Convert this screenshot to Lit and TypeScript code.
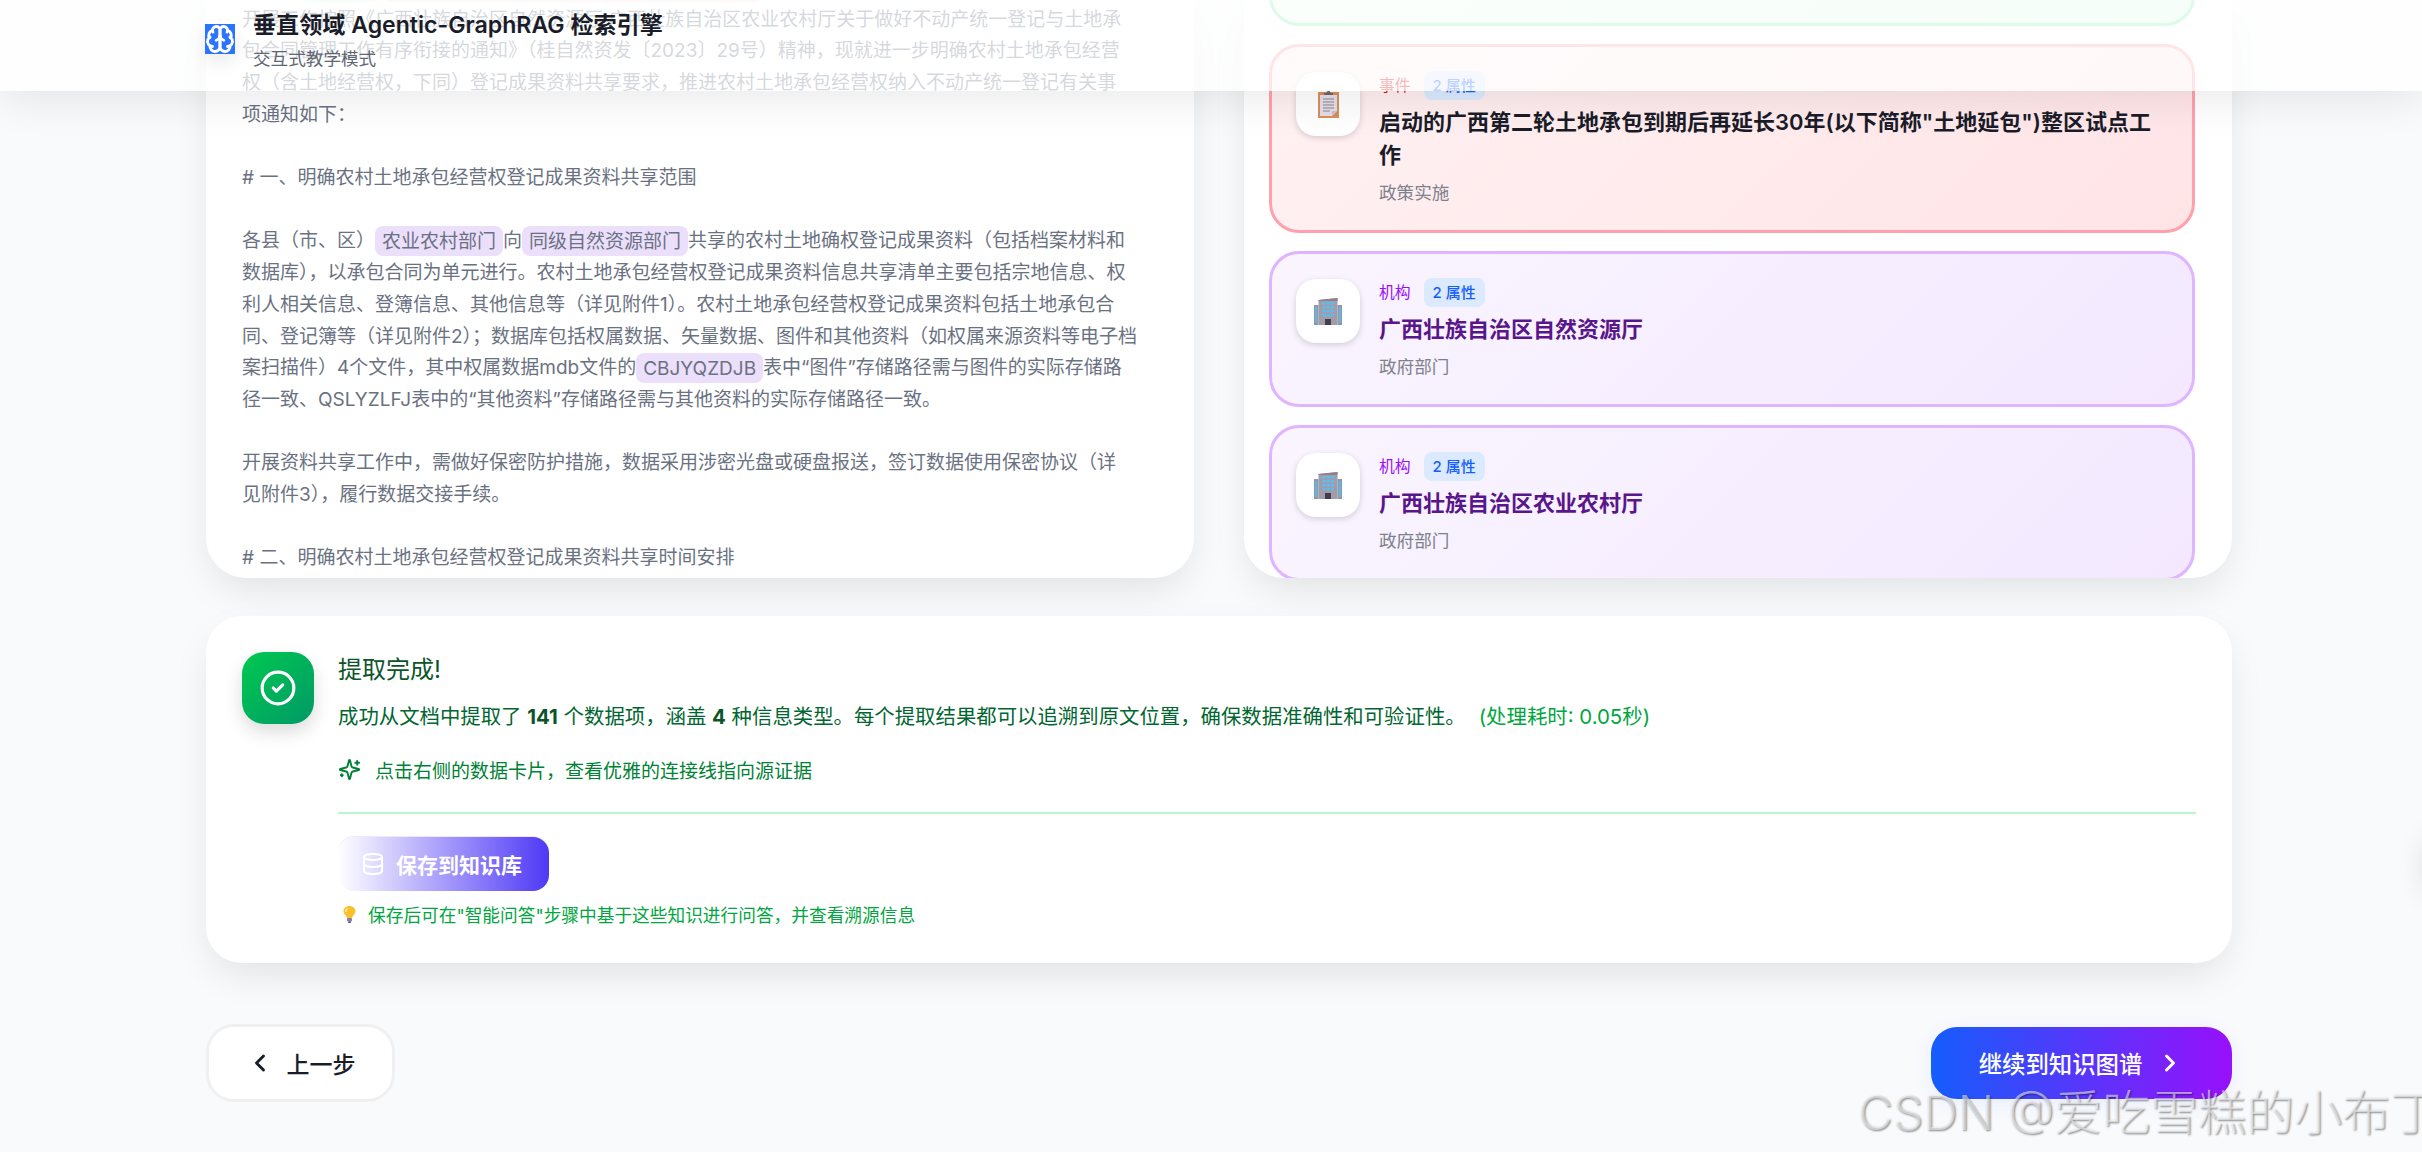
import { LitElement, html, css, svg } from "lit";
import { customElement } from "lit/decorators.js";

const buildingIcon = svg`<svg class="emoji-building" viewBox="0 0 28 27" xmlns="http://www.w3.org/2000/svg">
  <rect x="0" y="7" width="4.5" height="20" fill="#8f97a8"/><rect x="23.5" y="7" width="4.5" height="20" fill="#8f97a8"/>
  <rect x="1" y="9" width="2" height="16" fill="#4fc3f7" opacity=".75"/><rect x="25" y="9" width="2" height="16" fill="#4fc3f7" opacity=".75"/>
  <path d="M4.5 2 L23.5 0 V27 H4.5 Z" fill="#a49ba8"/>
  <path d="M4.5 2 L23.5 0 V3 H4.5 Z" fill="#8a828f"/>
  ${[4, 8, 12, 16].map((y) => [8.5, 12.8, 17.1].map((x) => svg`<rect x="${x}" y="${y}" width="3" height="2.4" fill="#4fc3f7"/>`))}
  <rect x="11" y="21" width="6" height="6" fill="#413f4a"/>
</svg>`;

const clipboardIcon = svg`<svg class="emoji-clip" viewBox="0 0 21 27" xmlns="http://www.w3.org/2000/svg">
  <rect x="0" y="1" width="21" height="26" fill="#d98f58"/>
  <path d="M2 4 H19 V20 L14 25 H2 Z" fill="#e4dde8"/>
  <path d="M14 25 V20 H19 Z" fill="#c9c0cf"/>
  <path d="M5 8 H16 M5 11 H16 M5 14 H16 M5 17 H16 M5 20 H12" stroke="#8d8794" stroke-width="1"/>
  <path d="M6 4 V2 H8.5 C8.5 -.6 12.5 -.6 12.5 2 H15 V4 Z" fill="#6b6570"/>
</svg>`;

const bulbIcon = svg`<svg class="emoji-bulb" viewBox="0 0 13 17" xmlns="http://www.w3.org/2000/svg">
  <path d="M6.5 0 C2.8 0 .5 2.5 .5 5.3 C.5 8 3.6 9.5 4 12 H9 C9.4 9.5 12.5 8 12.5 5.3 C12.5 2.5 10.2 0 6.5 0 Z" fill="#fbc02d"/>
  <path d="M4.5 2.5 C3 3.4 2.6 5 3 6" stroke="#fff3b0" stroke-width="1.2" fill="none"/>
  <rect x="4" y="12" width="5" height="3.6" rx="1" fill="#8e7ca6"/><rect x="5.2" y="15.4" width="2.6" height="1.6" fill="#5f5470"/>
</svg>`;

const brainIcon = svg`<svg viewBox="0 0 24 24" fill="none" stroke="#fff" stroke-width="2.3" stroke-linecap="round" stroke-linejoin="round" xmlns="http://www.w3.org/2000/svg">
  <path d="M12 5a3 3 0 1 0-5.997.125 4 4 0 0 0-2.526 5.77 4 4 0 0 0 .556 6.588A4 4 0 1 0 12 18Z"/>
  <path d="M12 5a3 3 0 1 1 5.997.125 4 4 0 0 1 2.526 5.77 4 4 0 0 1-.556 6.588A4 4 0 1 1 12 18Z"/>
  <path d="M15 13a4.5 4.5 0 0 1-3-4 4.5 4.5 0 0 1-3 4"/>
  <path d="M17.599 6.5a3 3 0 0 0 .399-1.375"/><path d="M6.003 5.125A3 3 0 0 0 6.401 6.5"/>
  <path d="M3.477 10.896a4 4 0 0 1 .585-.396"/><path d="M19.938 10.5a4 4 0 0 1 .585.396"/>
  <path d="M6 18a4 4 0 0 1-1.967-.516"/><path d="M19.967 17.484A4 4 0 0 1 18 18"/>
</svg>`;

interface Entry {
  tone: string;
  kind: string;
  title: string;
  sub: string;
  icon: unknown;
}

const entries: Entry[] = [
  { tone: "green", kind: "日期", title: "2023年11月", sub: "时间节点", icon: clipboardIcon },
  { tone: "red", kind: "事件", title: '启动的广西第二轮土地承包到期后再延长30年(以下简称"土地延包")整区试点工作', sub: "政策实施", icon: clipboardIcon },
  { tone: "purple", kind: "机构", title: "广西壮族自治区自然资源厅", sub: "政府部门", icon: buildingIcon },
  { tone: "purple", kind: "机构", title: "广西壮族自治区农业农村厅", sub: "政府部门", icon: buildingIcon },
];

@customElement("app-root")
export class AppRoot extends LitElement {
  static styles = css`
    :host {
      display: block;
      position: relative;
      width: 2422px;
      height: 1152px;
      overflow: hidden;
      background: #f9fafc;
      font-family: "Inter", "Noto Sans CJK SC", sans-serif;
      color: #1f2937;
    }
    .header {
      position: absolute;
      inset: 0 0 auto 0;
      height: 91px;
      z-index: 5;
      display: flex;
      align-items: flex-start;
      gap: 18px;
      padding-left: 205px;
      box-sizing: border-box;
      background: rgba(255, 255, 255, 0.72);
      box-shadow: 0 8px 44px rgba(0, 0, 0, 0.09);
    }
    .logo {
      width: 30px;
      height: 30px;
      margin-top: 24px;
      background: #2b74ff;
      box-shadow: 0 8px 18px rgba(0, 0, 0, 0.08);
    }
    .logo svg { display: block; width: 30px; height: 30px; }
    .brand { padding-top: 7px; }
    .brand h1 {
      margin: 0;
      font-size: 23.1px;
      line-height: 36px;
      font-weight: 600;
      color: #1a1d29;
    }
    .brand p {
      margin: 3px 0 0;
      font-size: 17.6px;
      line-height: 26px;
      color: #5f6674;
    }
    .ghost {
      position: absolute;
      left: 2052px;
      top: 24px;
      height: 24px;
      font-size: 17.6px;
      line-height: 24px;
      color: #fff;
      white-space: nowrap;
    }
    .edge {
      position: absolute;
      left: 2426px;
      top: 833px;
      width: 30px;
      height: 60px;
      border-radius: 30px;
      box-shadow: 0 4px 30px rgba(0, 0, 0, 0.12);
    }
    .page {
      display: flex;
      flex-direction: column;
      padding: 0 190px 0 206px;
    }
    .panels {
      display: grid;
      grid-template-columns: 988px 988px;
      gap: 50px;
      height: 578px;
    }
    .panel {
      height: 578px;
      background: #fff;
      border-radius: 0 0 40px 40px;
      overflow: hidden;
      display: flex;
      flex-direction: column;
      justify-content: flex-end;
      box-shadow: 0 16px 40px -8px rgba(0, 0, 0, 0.11);
    }
    .doc {
      padding: 0 36px 4px;
      font-size: 19px;
      line-height: 31.68px;
      color: #6a7282;
      white-space: pre;
    }
    mark {
      color: inherit;
      padding: 3.5px 7px;
      border-radius: 8px;
      background: #ecdffc;
    }
    mark.g { background: #dcfce7; }
    mark.r { background: #ffe4e6; margin-left: 4px; }
    .cards {
      display: flex;
      flex-direction: column;
      gap: 18px;
      padding: 0 37px 0 25px;
      margin-bottom: -3px;
    }
    .card {
      display: flex;
      gap: 19px;
      padding: 24px 28px 24px 24px;
      border: 3px solid;
      border-radius: 30px;
      flex: none;
    }
    .card.purple { background: linear-gradient(135deg, #faf5ff, #f3e8ff); border-color: #dfb5ff; }
    .card.red { background: linear-gradient(135deg, #fff1f2, #ffe4e6); border-color: #ffa1ad; }
    .card.green { background: linear-gradient(135deg, #f0fdf4, #dcfce7); border-color: #86efac; }
    .tile {
      flex: none;
      width: 64px;
      height: 64px;
      margin-top: 1px;
      border-radius: 20px;
      background: #fff;
      display: flex;
      align-items: center;
      justify-content: center;
      box-shadow: 0 2px 6px rgba(0, 0, 0, 0.16);
    }
    .emoji-building { width: 28px; height: 27px; }
    .emoji-clip { width: 21px; height: 27px; }
    .emoji-bulb { width: 13px; height: 17px; }
    .meta { display: flex; align-items: center; gap: 13px; height: 29px; }
    .kind { font-size: 15.8px; font-weight: 400; margin-top: -2px; }
    .purple .kind { color: #9810fa; }
    .red .kind { color: #e7000b; }
    .green .kind { color: #00a63e; }
    .badge {
      padding: 0 9px;
      height: 29px;
      line-height: 29px;
      border-radius: 8px;
      background: #dbeafe;
      color: #155dfc;
      font-size: 15px;
      font-weight: 500;
    }
    .body h3 {
      margin: 6px 0 0;
      font-size: 22px;
      line-height: 33px;
      font-weight: 600;
      color: #1a1d29;
    }
    .purple h3 { color: #59168b; }
    .body p {
      margin: 8px 0 0;
      font-size: 17.6px;
      line-height: 26px;
      color: #7d818c;
    }
    .summary {
      margin-top: 38px;
      height: 347px;
      box-sizing: border-box;
      background: #fff;
      border-radius: 36px;
      padding: 36px;
      display: flex;
      gap: 24px;
      box-shadow: 0 16px 40px -8px rgba(0, 0, 0, 0.11);
    }
    .ok {
      flex: none;
      width: 72px;
      height: 72px;
      border-radius: 22px;
      background: linear-gradient(135deg, #00c950, #009966);
      display: flex;
      align-items: center;
      justify-content: center;
      box-shadow: 0 8px 18px rgba(0, 0, 0, 0.14);
    }
    .ok svg { width: 38px; height: 38px; }
    .result { flex: 1; }
    .result h2 {
      margin: 0;
      font-size: 24px;
      line-height: 36px;
      font-weight: 400;
      color: #0d542b;
    }
    .desc {
      margin: 13px 0 0;
      font-size: 20.4px;
      line-height: 32px;
      color: #016630;
      white-space: nowrap;
    }
    .desc b { font-weight: 700; color: #0d542b; }
    .desc .time { margin-left: 13px; color: #00a63e; }
    .hint {
      margin-top: 22px;
      display: flex;
      align-items: center;
      gap: 14px;
      height: 28px;
      font-size: 19px;
      color: #008236;
    }
    .hint svg { width: 23px; height: 23px; }
    .rule { height: 2px; margin-top: 29px; background: #b9f8cf; }
    .save {
      margin-top: 23px;
      width: 211px;
      height: 54px;
      box-sizing: border-box;
      border-radius: 16px;
      display: flex;
      align-items: center;
      gap: 11px;
      padding-left: 23px;
      background: linear-gradient(90deg, #ffffff, #4f39f6);
      color: #fff;
      font-size: 21px;
      font-weight: 600;
      box-shadow: 0 -1px 0 rgba(79, 57, 246, 0.12);
    }
    .save svg { width: 24px; height: 24px; }
    .tip {
      margin-top: 9px;
      display: flex;
      align-items: center;
      gap: 12px;
      padding-left: 5px;
      height: 28px;
      font-size: 17.7px;
      color: #00a63e;
    }
    .nav {
      margin-top: 61px;
      display: flex;
      align-items: center;
      justify-content: space-between;
      height: 78px;
    }
    .prev {
      width: 189px;
      height: 78px;
      box-sizing: border-box;
      display: flex;
      align-items: center;
      justify-content: center;
      gap: 13px;
      border: 3px solid #f0f0f1;
      border-radius: 28px;
      background: #fff;
      font-size: 23px;
      font-weight: 500;
      color: #1a1d29;
    }
    .next {
      width: 301px;
      height: 72px;
      box-sizing: border-box;
      display: flex;
      align-items: center;
      justify-content: center;
      gap: 14px;
      border-radius: 26px;
      background: linear-gradient(90deg, #155dfc, #9810fa);
      color: #fff;
      font-size: 23.4px;
      font-weight: 500;
      box-shadow: 0 4px 20px rgba(21, 93, 252, 0.08);
    }
    .prev svg, .next svg { width: 28px; height: 28px; }
    .wm {
      position: absolute;
      left: 1858px;
      top: 1083px;
      z-index: 6;
      font-size: 48px;
      line-height: 60px;
      font-weight: 300;
      white-space: nowrap;
      color: rgba(255, 255, 255, 0.55);
      text-shadow: 1px 1px 2px rgba(0, 0, 0, 0.45);
    }
  `;

  private card(e: Entry) {
    return html`<div class="card ${e.tone}">
      <div class="tile">${e.icon}</div>
      <div class="body">
        <div class="meta"><span class="kind">${e.kind}</span><span class="badge">2 属性</span></div>
        <h3>${e.title}</h3>
        <p>${e.sub}</p>
      </div>
    </div>`;
  }

  render() {
    return html`
      <header class="header">
        <div class="logo">${brainIcon}</div>
        <div class="brand">
          <h1>垂直领域 Agentic-GraphRAG 检索引擎</h1>
          <p>交互式教学模式</p>
        </div>
        <span class="ghost">知识抽取与溯源</span>
      </header>
      <div class="edge"></div>
      <div class="page">
        <section class="panels">
          <article class="panel">
            <div class="doc">为切实<mark class="g">2023年</mark><mark class="r">启动的广西第二轮土地承包到期后再延长30</mark>
开展工作按照《广西壮族自治区自然资源厅 广西壮族自治区农业农村厅关于做好不动产统一登记与土地承
包合同管理工作有序衔接的通知》（桂自然资发〔2023〕29号）精神，现就进一步明确农村土地承包经营
权（含土地经营权，下同）登记成果资料共享要求，推进农村土地承包经营权纳入不动产统一登记有关事
项通知如下：

# 一、明确农村土地承包经营权登记成果资料共享范围

各县（市、区）<mark>农业农村部门</mark>向<mark>同级自然资源部门</mark>共享的农村土地确权登记成果资料（包括档案材料和
数据库），以承包合同为单元进行。农村土地承包经营权登记成果资料信息共享清单主要包括宗地信息、权
利人相关信息、登簿信息、其他信息等（详见附件1）。农村土地承包经营权登记成果资料包括土地承包合
同、登记簿等（详见附件2）；数据库包括权属数据、矢量数据、图件和其他资料（如权属来源资料等电子档
案扫描件）4个文件，其中权属数据mdb文件的<mark>CBJYQZDJB</mark>表中“图件”存储路径需与图件的实际存储路
径一致、QSLYZLFJ表中的“其他资料”存储路径需与其他资料的实际存储路径一致。

开展资料共享工作中，需做好保密防护措施，数据采用涉密光盘或硬盘报送，签订数据使用保密协议（详
见附件3），履行数据交接手续。

# 二、明确农村土地承包经营权登记成果资料共享时间安排</div>
          </article>
          <article class="panel">
            <div class="cards">${entries.map((e) => this.card(e))}</div>
          </article>
        </section>

        <section class="summary">
          <div class="ok">
            <svg viewBox="0 0 24 24" fill="none" stroke="#fff" stroke-width="2" stroke-linecap="round" stroke-linejoin="round"><circle cx="12" cy="12" r="10"/><path d="m9 12 2 2 4-4"/></svg>
          </div>
          <div class="result">
            <h2>提取完成!</h2>
            <p class="desc">成功从文档中提取了 <b>141</b> 个数据项，涵盖 <b>4</b> 种信息类型。每个提取结果都可以追溯到原文位置，确保数据准确性和可验证性。<span class="time">(处理耗时: 0.05秒)</span></p>
            <div class="hint">
              <svg viewBox="0 0 24 24" fill="none" stroke="currentColor" stroke-width="2" stroke-linecap="round" stroke-linejoin="round"><path d="M9.937 15.5A2 2 0 0 0 8.5 14.063l-6.135-1.582a.5.5 0 0 1 0-.962L8.5 9.936A2 2 0 0 0 9.937 8.5l1.582-6.135a.5.5 0 0 1 .963 0L14.063 8.5A2 2 0 0 0 15.5 9.937l6.135 1.581a.5.5 0 0 1 0 .964L15.5 14.063a2 2 0 0 0-1.437 1.437l-1.582 6.135a.5.5 0 0 1-.963 0z"/><path d="M20 3v4"/><path d="M22 5h-4"/><path d="M4 17v2"/><path d="M5 18H3"/></svg>
              <span>点击右侧的数据卡片，查看优雅的连接线指向源证据</span>
            </div>
            <div class="rule"></div>
            <div class="save">
              <svg viewBox="0 0 24 24" fill="none" stroke="currentColor" stroke-width="2" stroke-linecap="round" stroke-linejoin="round"><ellipse cx="12" cy="5" rx="9" ry="3"/><path d="M3 5V19A9 3 0 0 0 21 19V5"/><path d="M3 12A9 3 0 0 0 21 12"/></svg>
              <span>保存到知识库</span>
            </div>
            <div class="tip">${bulbIcon}<span>保存后可在"智能问答"步骤中基于这些知识进行问答，并查看溯源信息</span></div>
          </div>
        </section>

        <nav class="nav">
          <div class="prev">
            <svg viewBox="0 0 24 24" fill="none" stroke="currentColor" stroke-width="2.5" stroke-linecap="round" stroke-linejoin="round"><path d="m15 18-6-6 6-6"/></svg>
            <span>上一步</span>
          </div>
          <div class="next">
            <span>继续到知识图谱</span>
            <svg viewBox="0 0 24 24" fill="none" stroke="currentColor" stroke-width="2.5" stroke-linecap="round" stroke-linejoin="round"><path d="m9 18 6-6-6-6"/></svg>
          </div>
        </nav>
      </div>
      <div class="wm">CSDN @爱吃雪糕的小布丁</div>
    `;
  }
}
